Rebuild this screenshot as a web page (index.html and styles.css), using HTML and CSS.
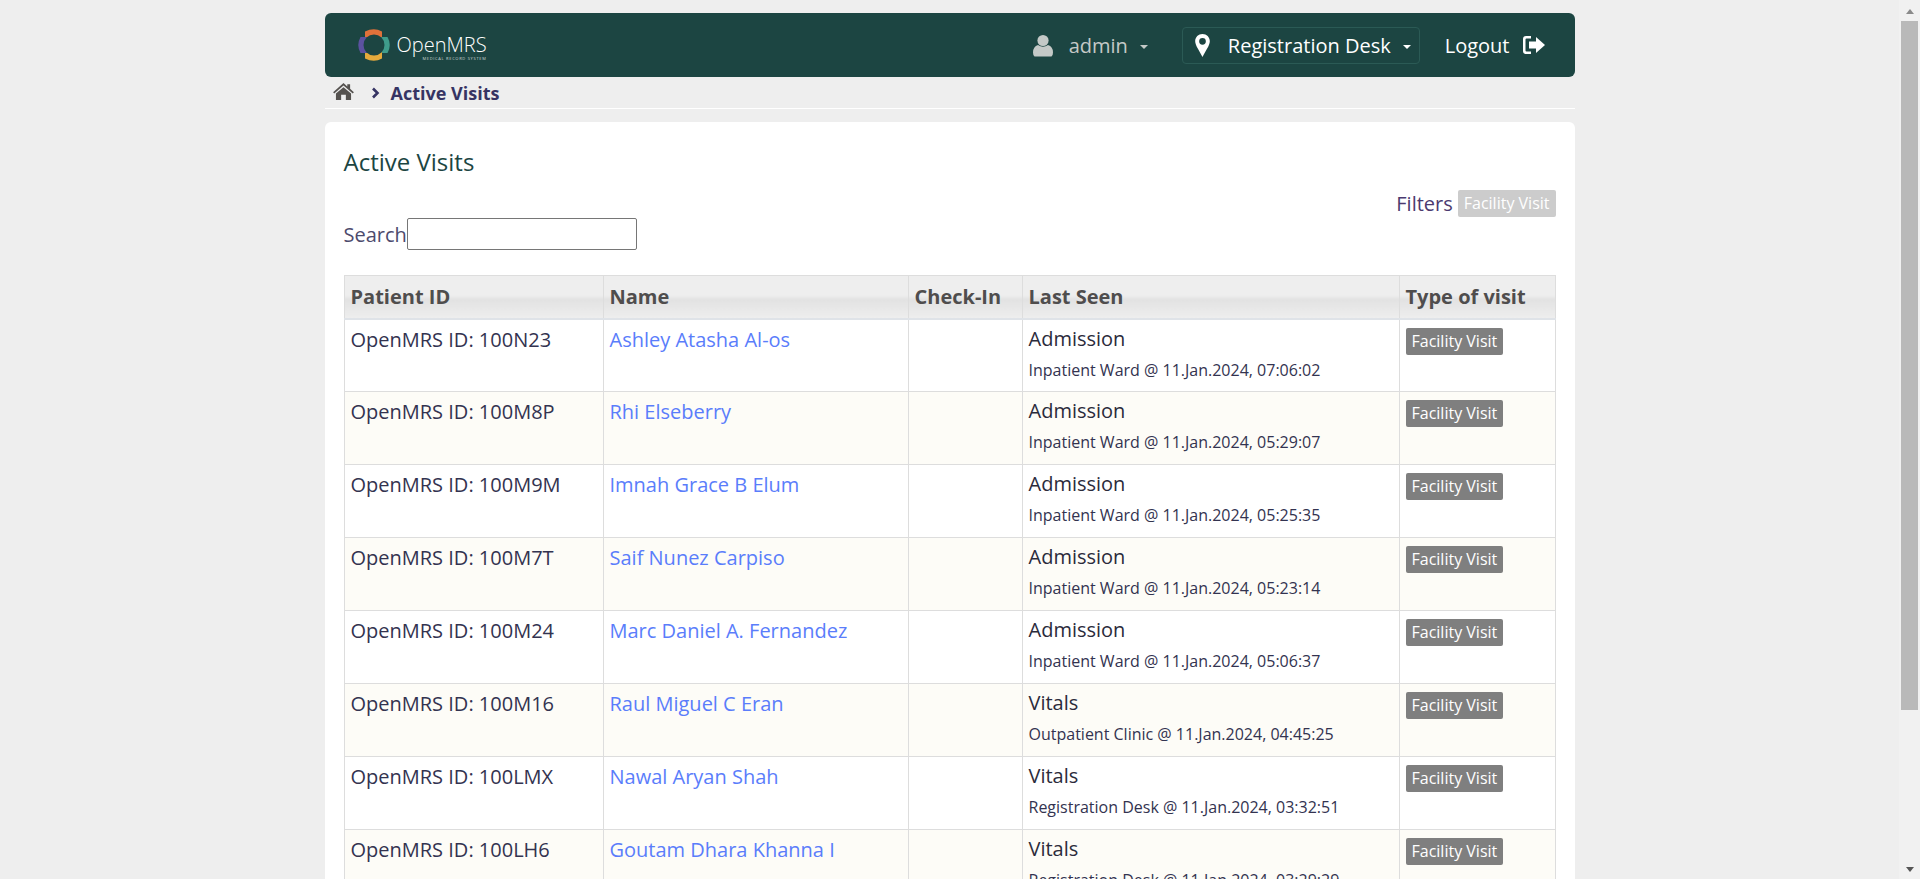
FILE: index.html
```html
<!DOCTYPE html>
<html lang="en">
<head>
  <meta charset="UTF-8">
  <meta name="viewport" content="width=device-width, initial-scale=1.0">
  <title>Active Visits</title>
  <link rel="stylesheet" href="styles.css">
</head>
<body>
  <div class="wrapper">
    <!-- Header -->
    <header class="header">
      <a class="logo" href="#">
        <svg class="logo-mark" viewBox="0 0 34 34" width="34" height="34">
          <path d="M8 11 V3.5 Q17 -1 25 3.5 V11 Z" fill="#e0713a"/>
          <path d="M23 9 H30.5 Q35 17 30.5 25 H23 Z" fill="#3f9c8c"/>
          <path d="M8 23 H25 V30.5 Q17 35 8 30.5 Z" fill="#e5aa3c"/>
          <path d="M11 9 H3.5 Q-1 17 3.5 25 H11 Z" fill="#5b52a0"/>
          <circle cx="17" cy="17" r="10.5" fill="#1c4542"/>
        </svg>
        <span class="logo-text">
          <span class="logo-name">OpenMRS</span>
          <span class="logo-sub">MEDICAL RECORD SYSTEM</span>
        </span>
      </a>
      <nav class="header-nav">
        <span class="nav-item nav-user">
          <svg class="icon" viewBox="0 0 20 22" width="20" height="23"><circle cx="10" cy="6" r="5.6"/><path d="M1.5 22 Q0 21 0 18 Q0 12 5 10.5 Q10 14 15 10.5 Q20 12 20 18 Q20 21 18.5 22 Z"/></svg>
          <span class="nav-label">admin</span>
          <span class="caret"></span>
        </span>
        <span class="nav-item nav-location">
          <svg class="icon" viewBox="0 0 14 22" width="15" height="23"><path fill-rule="evenodd" d="M7 0 C3 0 0 3 0 7 C0 11 4 16 7 22 C10 16 14 11 14 7 C14 3 11 0 7 0 Z M7 3.8 A3.2 3.2 0 1 1 7 10.2 A3.2 3.2 0 1 1 7 3.8 Z"/></svg>
          <span class="nav-label">Registration Desk</span>
          <span class="caret"></span>
        </span>
        <a class="nav-item nav-logout" href="#">
          <span class="nav-label">Logout</span>
          <svg class="icon" viewBox="0 0 22 18" width="22" height="18"><path d="M8 0 H3 Q0 0 0 3 V15 Q0 18 3 18 H8 V15.5 H3.5 Q2.5 15.5 2.5 14.5 V3.5 Q2.5 2.5 3.5 2.5 H8 Z"/><path d="M13 1 L22 9 L13 17 V12.5 H6 V5.5 H13 Z"/></svg>
        </a>
      </nav>
    </header>

    <!-- Breadcrumbs -->
    <div class="breadcrumbs">
      <svg class="home-icon" viewBox="0 0 22 18" width="21" height="17"><path d="M11 0 L15 3.6 V1.2 H18 V6.2 L22 9.8 L20.8 11 L11 2.6 L1.2 11 L0 9.8 Z"/><path d="M11 4.4 L19 11.2 V18 H13.5 V12.5 H8.5 V18 H3 V11.2 Z"/></svg>
      <svg class="crumb-arrow" viewBox="0 0 8 12" width="9" height="12"><path d="M1.5 1.5 L6 6 L1.5 10.5" fill="none" stroke="currentColor" stroke-width="2.6"/></svg>
      <span class="crumb-current">Active Visits</span>
    </div>

    <!-- Content -->
    <main class="card">
      <h2 class="card-title">Active Visits</h2>
      <div class="filters">
        <span class="filters-label">Filters</span>
        <span class="tag tag-off">Facility Visit</span>
      </div>
      <div class="search">
        <label for="search">Search</label><input type="text" id="search">
      </div>

      <table class="visits">
        <thead>
          <tr>
            <th class="col-id">Patient ID</th>
            <th class="col-name">Name</th>
            <th class="col-check">Check-In</th>
            <th class="col-seen">Last Seen</th>
            <th>Type of visit</th>
          </tr>
        </thead>
        <tbody>
          <tr>
            <td>OpenMRS ID: 100N23</td>
            <td><a href="#">Ashley Atasha Al-os</a></td>
            <td></td>
            <td><div class="seen">Admission</div><div class="seen-at">Inpatient Ward @ 11.Jan.2024, 07:06:02</div></td>
            <td><span class="tag">Facility Visit</span></td>
          </tr>
          <tr>
            <td>OpenMRS ID: 100M8P</td>
            <td><a href="#">Rhi Elseberry</a></td>
            <td></td>
            <td><div class="seen">Admission</div><div class="seen-at">Inpatient Ward @ 11.Jan.2024, 05:29:07</div></td>
            <td><span class="tag">Facility Visit</span></td>
          </tr>
          <tr>
            <td>OpenMRS ID: 100M9M</td>
            <td><a href="#">Imnah Grace B Elum</a></td>
            <td></td>
            <td><div class="seen">Admission</div><div class="seen-at">Inpatient Ward @ 11.Jan.2024, 05:25:35</div></td>
            <td><span class="tag">Facility Visit</span></td>
          </tr>
          <tr>
            <td>OpenMRS ID: 100M7T</td>
            <td><a href="#">Saif Nunez Carpiso</a></td>
            <td></td>
            <td><div class="seen">Admission</div><div class="seen-at">Inpatient Ward @ 11.Jan.2024, 05:23:14</div></td>
            <td><span class="tag">Facility Visit</span></td>
          </tr>
          <tr>
            <td>OpenMRS ID: 100M24</td>
            <td><a href="#">Marc Daniel A. Fernandez</a></td>
            <td></td>
            <td><div class="seen">Admission</div><div class="seen-at">Inpatient Ward @ 11.Jan.2024, 05:06:37</div></td>
            <td><span class="tag">Facility Visit</span></td>
          </tr>
          <tr>
            <td>OpenMRS ID: 100M16</td>
            <td><a href="#">Raul Miguel C Eran</a></td>
            <td></td>
            <td><div class="seen">Vitals</div><div class="seen-at">Outpatient Clinic @ 11.Jan.2024, 04:45:25</div></td>
            <td><span class="tag">Facility Visit</span></td>
          </tr>
          <tr>
            <td>OpenMRS ID: 100LMX</td>
            <td><a href="#">Nawal Aryan Shah</a></td>
            <td></td>
            <td><div class="seen">Vitals</div><div class="seen-at">Registration Desk @ 11.Jan.2024, 03:32:51</div></td>
            <td><span class="tag">Facility Visit</span></td>
          </tr>
          <tr>
            <td>OpenMRS ID: 100LH6</td>
            <td><a href="#">Goutam Dhara Khanna I</a></td>
            <td></td>
            <td><div class="seen">Vitals</div><div class="seen-at">Registration Desk @ 11.Jan.2024, 03:29:29</div></td>
            <td><span class="tag">Facility Visit</span></td>
          </tr>
        </tbody>
      </table>
      <div class="card-tail"></div>
    </main>
  </div>

  <!-- Window scrollbar -->
  <div class="scrollbar">
    <span class="scroll-up"></span>
    <span class="scroll-thumb"></span>
    <span class="scroll-down"></span>
  </div>
</body>
</html>
```

FILE: styles.css
```css
body {
  margin: 0;
  padding-right: 21px;
  background-color: #eeeeee;
  font-family: "Open Sans", sans-serif;
  font-size: 18px;
  color: #363463;
}
a {
  text-decoration: none;
}
.wrapper {
  width: 1250px;
  margin: 13px auto 0;
}

/* header */
.header {
  display: flex;
  align-items: center;
  justify-content: space-between;
  height: 64px;
  padding: 0 30px 0 32px;
  box-sizing: border-box;
  background-color: #1c4542;
  border-radius: 6px;
}
.logo {
  display: flex;
  align-items: center;
  gap: 6px;
  color: #fff;
}
.logo-text {
  display: flex;
  flex-direction: column;
  margin-top: 4px;
}
.logo-name {
  font-size: 20px;
  font-weight: 300;
  line-height: 22px;
}
.logo-sub {
  font-size: 4px;
  line-height: 5px;
  text-align: right;
  letter-spacing: 0.7px;
  color: #cfd8d6;
}
.header-nav {
  display: flex;
  align-items: center;
  font-size: 20px;
  color: #fff;
}
.nav-item {
  display: flex;
  align-items: center;
}
.icon {
  fill: currentColor;
}
.nav-user {
  color: #c4c9c7;
  margin-right: 34px;
}
.nav-user .nav-label {
  margin-left: 16px;
}
.nav-location {
  height: 37px;
  padding: 0 8px 0 12px;
  border: 1px solid #2b5a55;
  border-radius: 4px;
  box-sizing: border-box;
  margin-right: 25px;
}
.nav-location .nav-label {
  margin-left: 18px;
}
.nav-logout {
  color: #fff;
}
.nav-logout .icon {
  margin-left: 13px;
}
.caret {
  width: 0;
  height: 0;
  margin-left: 12px;
  margin-top: 3px;
  border-left: 4.5px solid transparent;
  border-right: 4.5px solid transparent;
  border-top: 4.5px solid currentColor;
}

/* breadcrumbs */
.breadcrumbs {
  display: flex;
  align-items: center;
  height: 31px;
  padding-left: 8px;
  border-bottom: 1px solid #ffffff;
  font-size: 18px;
  font-weight: 700;
}
.home-icon {
  fill: #55524f;
  margin-bottom: 2px;
}
.crumb-arrow {
  margin-left: 17px;
  margin-right: 11px;
}

/* card */
.card {
  margin-top: 13px;
  padding: 24px 19px 0;
  background-color: #fff;
  border-radius: 6px 6px 0 0;
}
.card-title {
  margin: 0;
  font-size: 24px;
  font-weight: 400;
  line-height: 32px;
  color: #1c4542;
}
.filters {
  display: flex;
  justify-content: flex-end;
  align-items: center;
  gap: 5px;
  margin-top: 11px;
  height: 28px;
}
.filters-label {
  font-size: 20px;
  color: #4b3a70;
}
.search {
  display: flex;
  align-items: center;
  margin-top: 1px;
  height: 32px;
  font-size: 20px;
  color: #4d4a6d;
}
.search input {
  width: 230px;
  height: 32px;
  padding: 1px 2px;
  box-sizing: border-box;
  border: 1px solid #767676;
  border-radius: 2px;
  background: #fff;
}
.tag {
  display: inline-block;
  padding: 0 6px;
  height: 27px;
  line-height: 27px;
  font-size: 16px;
  color: #fff;
  background-color: #7f7f7f;
  border-radius: 2px;
}
.tag-off {
  background-color: #cccccc;
}

/* table */
.visits {
  width: 1212px;
  margin-top: 25px;
  border-collapse: collapse;
  table-layout: fixed;
}
.col-id { width: 259px; }
.col-name { width: 305px; }
.col-check { width: 114px; }
.col-seen { width: 377px; }
.visits th,
.visits td {
  border: 1px solid #dddddd;
  padding: 5px 6px;
  text-align: left;
  vertical-align: top;
  box-sizing: border-box;
}
.visits th {
  height: 43px;
  vertical-align: middle;
  font-size: 20px;
  font-weight: 700;
  color: #4f4d4d;
  background: linear-gradient(to bottom, #eeeeee 0, #eeeeee 45%, #e2e2e2 55%, #eeeeee 100%);
  border-bottom: 2px solid #dfe3e8;
}
.visits td {
  height: 73px;
  line-height: 29px;
  font-size: 20px;
  color: #333350;
}
.visits tbody tr:nth-child(even) td {
  background-color: #fdfcf7;
}
.visits a {
  color: #5a7dfb;
}
.seen {
  margin-top: -1px;
  color: #2b2b3b;
}
.seen-at {
  font-size: 16px;
  line-height: 24px;
  margin-top: 5px;
}
.visits .tag {
  margin-top: 3px;
  display: block;
  width: max-content;
}
.card-tail {
  height: 175px;
}

/* scrollbar */
.scrollbar {
  position: fixed;
  top: 0;
  right: 0;
  bottom: 0;
  width: 21px;
  display: flex;
  flex-direction: column;
  align-items: center;
  background-color: #f1f1f1;
}
.scroll-up,
.scroll-down {
  width: 0;
  height: 0;
  border-left: 4.5px solid transparent;
  border-right: 4.5px solid transparent;
}
.scroll-up {
  margin: 9px 0 7px;
  border-bottom: 5px solid #8a8a8a;
}
.scroll-thumb {
  width: 17px;
  height: 689px;
  background-color: #b9b9b9;
}
.scroll-down {
  margin-top: auto;
  margin-bottom: 7px;
  border-top: 5px solid #555555;
}
```
